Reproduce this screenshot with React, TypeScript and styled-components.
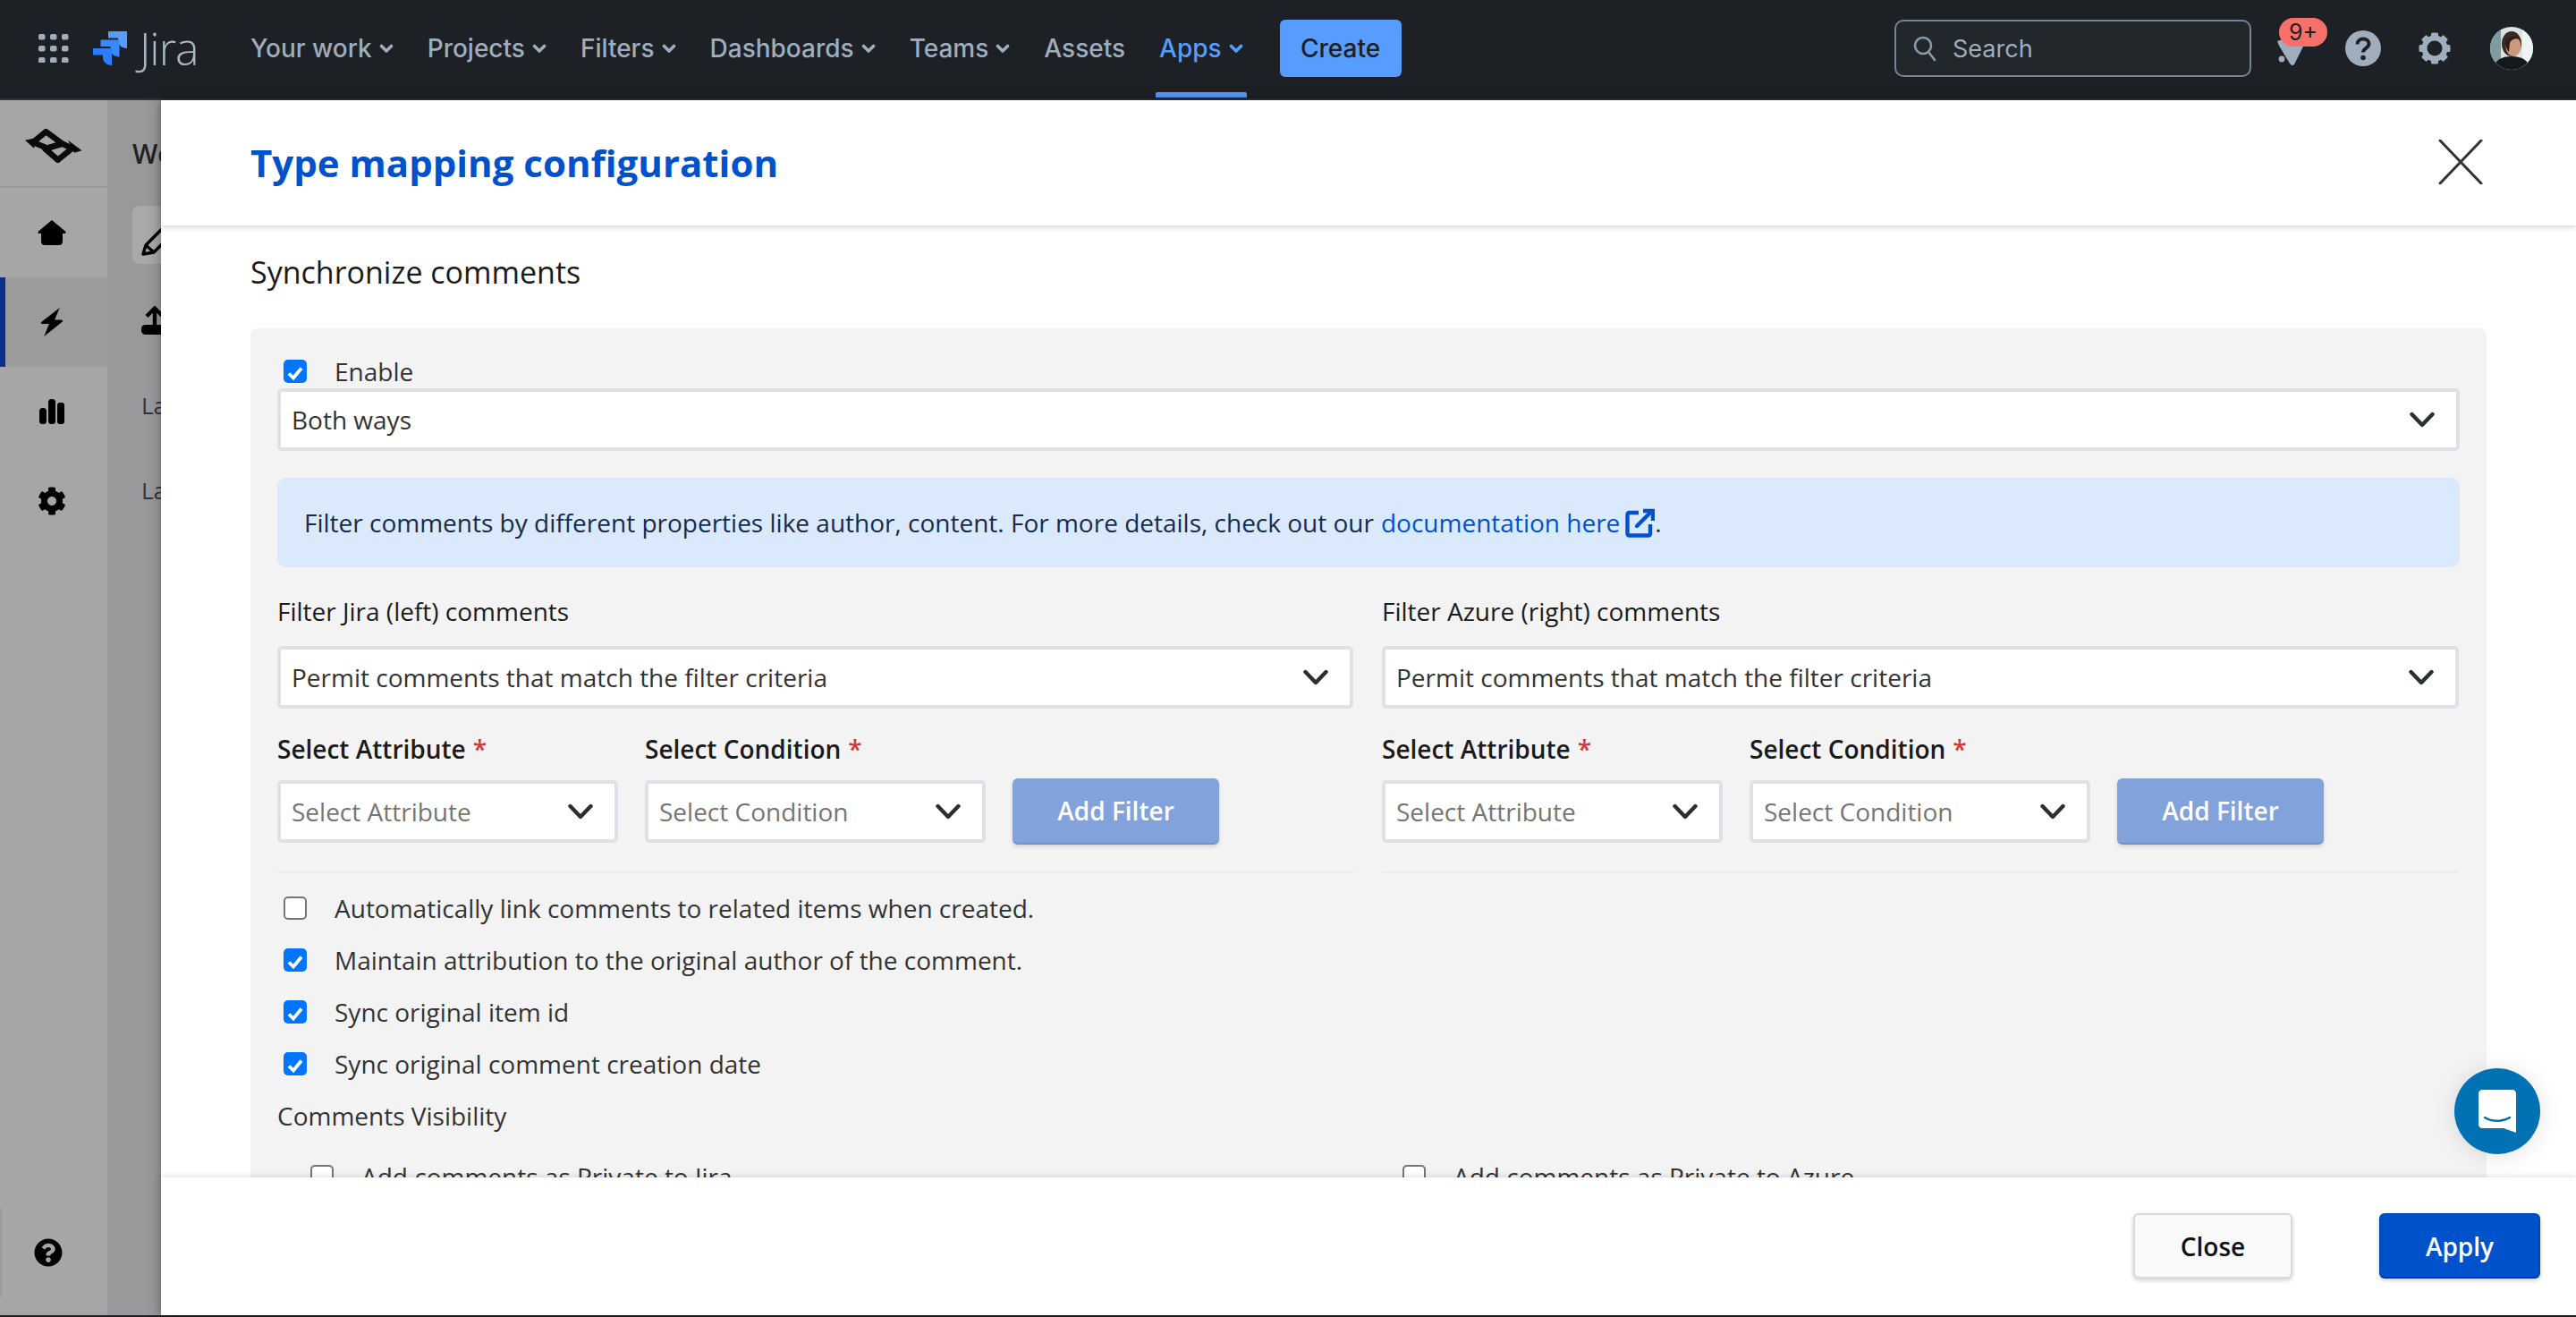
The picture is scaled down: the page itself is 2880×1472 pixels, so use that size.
import React from "react";
import styled, { createGlobalStyle } from "styled-components";
import { FaCog, FaQuestionCircle } from "react-icons/fa";

const Global = createGlobalStyle`
  html, body { margin: 0; padding: 0; background: #fff; }
  * { box-sizing: border-box; }
`;

const Chevron = () => (
  <svg width="16" height="16" viewBox="0 0 16 16" fill="none">
    <path d="M2.5 5.5l5.5 5.5 5.5-5.5" stroke="currentColor" strokeWidth="3.6" strokeLinecap="round" strokeLinejoin="round" />
  </svg>
);

const SelectArrow = () => (
  <svg width="28" height="18" viewBox="0 0 28 18" fill="none">
    <path d="M2.5 3l11.5 12L25.5 3" stroke="#2b2f33" strokeWidth="4.4" strokeLinecap="round" strokeLinejoin="round" />
  </svg>
);

const Tick = () => (
  <svg width="26" height="26" viewBox="0 0 26 26" fill="none">
    <path d="M6 13.5l5 5 9-11" stroke="#fff" strokeWidth="3.8" />
  </svg>
);

const Grid = () => (
  <svg width="34" height="32" viewBox="0 0 34 32" fill="#9fadbc">
    {[0, 13, 26].map((y) =>
      [0, 13, 26].map((x) => <rect key={`${x}-${y}`} x={x} y={y} width="7.5" height="6.5" rx="2" />)
    )}
  </svg>
);

const jiraPiece = "M0 0h21v19c-6 0-10-4-10-9V7.500H0z";

const JiraMark = () => (
  <svg width="38" height="38" viewBox="0 0 38 38">
    <path d={jiraPiece} transform="translate(17 0)" fill="#579dff" />
    <path d={jiraPiece} transform="translate(8.500 9.500)" fill="#388bff" />
    <path d={jiraPiece} transform="translate(0 19)" fill="#2c7dff" />
  </svg>
);

const HeaderSearch = () => (
  <svg width="26" height="30" viewBox="0 0 26 30" fill="none" stroke="#8c9bab" strokeWidth="2.6">
    <circle cx="11" cy="12" r="9" />
    <path d="M17 19l7 9" strokeLinecap="round" />
  </svg>
);

const Bell = () => (
  <svg width="34" height="38" viewBox="0 0 34 38" fill="#9fadbc">
    <path d="M0 10L30 0l4 6-15 30c-2 2-3 1-5-1L2 15z" />
    <circle cx="5" cy="30" r="3.4" />
  </svg>
);

const HelpDot = () => (
  <svg width="40" height="40" viewBox="0 0 40 40">
    <circle cx="20" cy="20" r="20" fill="#9fadbc" />
    <path d="M13.5 15.5c0-3.6 2.8-6 6.5-6s6.5 2.4 6.5 5.6c0 4.8-6.5 4.6-6.5 9.4" fill="none" stroke="#1d2125" strokeWidth="4" />
    <circle cx="20" cy="30.5" r="2.8" fill="#1d2125" />
  </svg>
);

const HeaderGear = () => (
  <svg width="36" height="36" viewBox="0 0 36 36" fill="#9fadbc">
    {[0, 45, 90, 135, 180, 225, 270, 315].map((a) => (
      <rect key={a} x="14" y="0.5" width="8" height="8" rx="1.6" transform={`rotate(${a} 18 18)`} />
    ))}
    <circle cx="18" cy="18" r="11.5" fill="none" stroke="#9fadbc" strokeWidth="6" />
  </svg>
);

const Avatar = () => (
  <svg width="48" height="48" viewBox="0 0 48 48">
    <clipPath id="av"><circle cx="24" cy="24" r="24" /></clipPath>
    <g clipPath="url(#av)">
      <rect width="48" height="48" fill="#d9e3e2" />
      <rect x="0" y="0" width="12" height="48" fill="#7d9ca0" />
      <rect x="36" y="0" width="12" height="48" fill="#eef3f3" />
      <ellipse cx="24" cy="19" rx="11" ry="14" fill="#3a2a22" />
      <ellipse cx="26" cy="22" rx="8.5" ry="11" fill="#c99a80" />
      <path d="M17 18c1-8 13-10 17-4-6-2-10 0-12 4l-1 10c-2-2-4-6-4-10z" fill="#2c1f19" />
      <path d="M4 48c0-10 8-15 20-15s20 5 20 15z" fill="#14191d" />
    </g>
  </svg>
);

const SideBrand = () => (
  <svg width="64" height="38" viewBox="0 0 64 38" fill="none" stroke="#0b0b0b" strokeWidth="6.500" strokeLinejoin="round">
    <path d="M9 15L23.300 3.200 41.700 16.700 25 21.700z" />
    <path d="M22.300 22.300L36.700 34.800 52.700 21.700 41.700 16.700z" />
    <path d="M0 12.700L13 10 10 21.700z" fill="#0b0b0b" stroke="none" />
    <path d="M63.500 24.300L48 12.700 55 26.700z" fill="#0b0b0b" stroke="none" />
  </svg>
);

const HomeIcon = () => (
  <svg width="32" height="28" viewBox="0 0 32 28" fill="#000">
    <path d="M16 0L31 12.500c1 1 .6 2.500-1 2.500h-2v9c0 2.400-1.600 4-4 4H8c-2.400 0-4-1.600-4-4v-9H2c-1.600 0-2-1.500-1-2.500z" />
  </svg>
);

const BoltIcon = () => (
  <svg width="26" height="32" viewBox="0 0 24 31" fill="#000">
    <path d="M20.500 0L.5 15.500c-.5 1 0 2 1 2H9L3.500 31l20-16c.5-1 0-2-1-2H15z" />
  </svg>
);

const Bars = () => (
  <svg width="28" height="28" viewBox="0 0 28 28" fill="#000">
    <rect x="0" y="10" width="8" height="18" rx="3.500" />
    <rect x="10" y="0" width="8" height="28" rx="3.500" />
    <rect x="20" y="4" width="8" height="24" rx="3" />
  </svg>
);

const ExternalLink = () => (
  <svg width="33" height="33" viewBox="0 0 33 33" fill="none" stroke="#0052cc" strokeWidth="4.4">
    <path d="M15 5H5C3.500 5 2.500 6 2.500 7.500v20.500c0 1.500 1 2.500 2.500 2.500h20.500c1.500 0 2.500-1 2.500-2.500V18" />
    <path d="M13 20L29 4" strokeLinecap="round" />
    <path d="M20 3h11v11" />
  </svg>
);

const Pencil = () => (
  <svg width="44" height="44" viewBox="0 0 44 44" fill="none" stroke="#000" strokeWidth="3.400">
    <path d="M3 40l3-10L30 6l9 8-24 24z" strokeLinejoin="round" />
    <path d="M6 30l9 8M26 10l9 8" />
  </svg>
);

const Upload = () => (
  <svg width="32" height="32" viewBox="0 0 32 32" fill="none">
    <rect x="0" y="21" width="32" height="11" rx="4.500" fill="#000" />
    <path d="M15 24V3M6 11.500L15 2.500l9 9" stroke="#000" strokeWidth="4.400" />
  </svg>
);

const Page = styled.div`
  width: 2880px;
  height: 1472px;
  display: flex;
  flex-direction: column;
  overflow: hidden;
  background: #1d2125;
  position: relative;
`;

const TopBar = styled.header`
  height: 112px;
  flex: none;
  display: flex;
  align-items: center;
  background: #1d2125;
  border-bottom: 2px solid #2c333a;
  padding: 0 48px 2px 43px;
  font-family: Inter, "Liberation Sans", sans-serif;
`;

const Brand = styled.div`
  display: flex;
  align-items: center;
  gap: 27px;
  margin-right: 60px;
`;

const BrandGroup = styled.div`
  display: flex;
  align-items: center;
  gap: 14px;
`;

const BrandName = styled.span`
  width: 64px;
  color: #a8b6c6;
  font-family: "Open Sans", sans-serif;
  font-weight: 300;
  font-size: 50px;
  line-height: 1;
  letter-spacing: -1px;
`;

const Nav = styled.nav`
  display: flex;
  align-items: center;
  height: 100%;
  gap: 38px;
`;

const NavItem = styled.div<{ $active?: boolean }>`
  position: relative;
  display: flex;
  align-items: center;
  height: 100%;
  gap: 8px;
  font-size: 28px;
  font-weight: 500;
  color: ${(p) => (p.$active ? "#579dff" : "#9fadbc")};
  ${(p) =>
    p.$active &&
    `&::after {
      content: "";
      position: absolute;
      left: -4px;
      right: -4px;
      bottom: -1px;
      height: 6px;
      border-radius: 2px 2px 0 0;
      background: #579dff;
    }`}
`;

const CreateButton = styled.button`
  width: 136px;
  height: 64px;
  margin-left: 41px;
  border: none;
  border-radius: 6px;
  background: #579dff;
  color: #1d2125;
  font: 500 28px Inter, sans-serif;
`;

const Spacer = styled.div`
  flex: 1;
`;

const SearchBox = styled.div`
  width: 399px;
  height: 64px;
  display: flex;
  align-items: center;
  gap: 18px;
  padding-left: 19px;
  border: 2px solid #738496;
  border-radius: 10px;
  background: #22272b;
  color: #9fadbc;
  font-size: 27px;
`;

const Actions = styled.div`
  display: flex;
  align-items: center;
  margin-left: 29px;
`;

const BellWrap = styled.div`
  position: relative;
  width: 34px;
  height: 38px;
  margin-top: 2px;
  margin-right: 42px;
`;

const Badge = styled.span`
  position: absolute;
  left: 2px;
  top: -16px;
  width: 54px;
  height: 32px;
  border-radius: 16px;
  background: #f87168;
  color: #1d2125;
  font-size: 25px;
  line-height: 32px;
  text-align: center;
`;

const ActionGap = styled.div<{ $w: number }>`
  display: flex;
  margin-right: ${(p) => p.$w}px;
`;

const Main = styled.div`
  flex: 1;
  min-height: 0;
  display: flex;
  margin-bottom: 2px;
`;

const Sidebar = styled.aside`
  width: 120px;
  flex: none;
  display: flex;
  flex-direction: column;
  background: #a6a6a6;
  position: relative;
`;

const SideLogo = styled.div`
  height: 98px;
  flex: none;
  display: flex;
  align-items: center;
  padding: 5px 0 0 28px;
  border-bottom: 2px solid #999;
`;

const SideItem = styled.div<{ $active?: boolean }>`
  height: 100px;
  flex: none;
  display: flex;
  align-items: center;
  justify-content: center;
  padding-right: 4px;
  color: #000;
  font-size: 32px;
  background: ${(p) => (p.$active ? "#9b9b9b" : "transparent")};
  box-shadow: ${(p) => (p.$active ? "inset 6px 0 0 #07308a" : "none")};
`;

const SideHelp = styled.div`
  margin-top: auto;
  height: 100px;
  margin-bottom: 20px;
  display: flex;
  align-items: center;
  padding-left: 38px;
  color: #000;
  font-size: 32px;
  box-shadow: inset 2px 0 0 #9c9c9c;
`;

const SubPanel = styled.div`
  width: 60px;
  flex: none;
  overflow: hidden;
  background: #99999b;
  padding: 40px 0 0 28px;
  font-family: "Open Sans", sans-serif;
`;

const SubInner = styled.div`
  width: 300px;
  display: flex;
  flex-direction: column;
`;

const SubTitle = styled.div`
  height: 40px;
  font-size: 30px;
  font-weight: 600;
  line-height: 40px;
  color: #222;
`;

const SubTool = styled.div`
  width: 200px;
  height: 65px;
  margin-top: 38px;
  padding: 14px 0 0 9px;
  border-radius: 8px;
  background: #a9a9ab;
`;

const SubUpload = styled.div`
  height: 32px;
  margin: 47px 0 0 10px;
`;

const SubLine = styled.div<{ $top: number }>`
  margin: ${(p) => p.$top}px 0 0 10px;
  font-size: 26px;
  font-weight: 500;
  line-height: 36px;
  color: #2b3648;
`;

const Modal = styled.section`
  flex: 1;
  min-width: 0;
  position: relative;
  display: flex;
  flex-direction: column;
  background: #fff;
  box-shadow: 0 0 14px rgba(0, 0, 0, 0.35);
  font-family: "Open Sans", sans-serif;
`;

const ModalHeader = styled.div`
  height: 140px;
  flex: none;
  position: relative;
  z-index: 1;
  display: flex;
  align-items: center;
  justify-content: space-between;
  padding: 0 104px 2px 100px;
  background: #fff;
  box-shadow: 0 2px 6px rgba(0, 0, 0, 0.18);
`;

const ModalTitle = styled.h1`
  margin: 0;
  font-size: 42px;
  font-weight: 700;
  color: #0052cc;
`;

const ModalBody = styled.div`
  flex: 1;
  min-height: 0;
  overflow: hidden;
  padding: 27px 100px 0 100px;
`;

const SectionTitle = styled.h2`
  margin: 0 0 38px;
  font-size: 34px;
  font-weight: 400;
  line-height: 50px;
  color: #1b1b1b;
`;

const Card = styled.div`
  display: flex;
  flex-direction: column;
  padding: 31px 30px 40px;
  border-radius: 8px;
  background: #f3f3f3;
  color: #333;
  font-size: 28px;
`;

const CheckRow = styled.label<{ $indent?: number; $below?: number }>`
  display: flex;
  align-items: center;
  height: 34px;
  margin-left: ${(p) => p.$indent ?? 7}px;
  margin-bottom: ${(p) => p.$below ?? 0}px;
  gap: 31px;
  line-height: 34px;
  white-space: nowrap;
`;

const CheckBox = styled.span<{ $on?: boolean }>`
  width: 26px;
  height: 26px;
  flex: none;
  border-radius: 5px;
  background: ${(p) => (p.$on ? "#0075ff" : "#fff")};
  border: ${(p) => (p.$on ? "none" : "2px solid #767676")};
`;

const SelectBox = styled.div<{ $w?: number; $muted?: boolean }>`
  width: ${(p) => (p.$w ? `${p.$w}px` : "100%")};
  height: 70px;
  display: flex;
  align-items: center;
  justify-content: space-between;
  padding: 0 24px 0 12px;
  border: 4px solid #dfe1e6;
  border-radius: 5px;
  background: #fff;
  color: ${(p) => (p.$muted ? "#757575" : "#333")};
`;

const Banner = styled.div`
  height: 100px;
  margin-top: 30px;
  display: flex;
  align-items: center;
  padding-left: 30px;
  border-radius: 10px;
  background: #dbe9fd;
  color: #172b4d;
`;

const DocLink = styled.a`
  display: inline-flex;
  align-items: center;
  gap: 6px;
  margin-left: 8px;
  color: #0052cc;
`;

const Columns = styled.div`
  display: grid;
  grid-template-columns: 1203px 1204px;
  column-gap: 32px;
`;

const FilterColumn = styled.div`
  display: flex;
  flex-direction: column;
`;

const ColumnLabel = styled.div`
  height: 38px;
  margin: 30px 0 20px;
  line-height: 38px;
  color: #1b1b1b;
`;

const FieldRow = styled.div`
  display: flex;
  align-items: flex-end;
  gap: 30px;
  height: 184px;
  padding-bottom: 32px;
  margin-bottom: 22px;
  border-bottom: 2px solid #ececec;
`;

const Field = styled.div`
  display: flex;
  flex-direction: column;
  gap: 16px;
`;

const FieldLabel = styled.div`
  font-weight: 600;
  line-height: 38px;
  color: #1b1b1b;
`;

const Req = styled.span`
  margin-left: 8px;
  color: #d03a36;
`;

const AddFilter = styled.button`
  width: 231px;
  height: 74px;
  margin: 0 0 -2px 0;
  border: none;
  border-bottom: 2px solid #7391cc;
  border-radius: 6px;
  background: #82a2dc;
  box-shadow: 0 2px 4px rgba(0, 0, 0, 0.15);
  color: #fff;
  font: 600 28px "Open Sans", sans-serif;
`;

const CheckList = styled.div`
  display: flex;
  flex-direction: column;
  gap: 24px;
`;

const VisibilityTitle = styled.div`
  height: 34px;
  margin-top: 24px;
  line-height: 34px;
  color: #333;
`;

const VisibilityGrid = styled.div`
  display: grid;
  grid-template-columns: 1235px 1fr;
  margin-top: 34px;
`;

const ModalFooter = styled.div`
  height: 154px;
  flex: none;
  position: relative;
  z-index: 1;
  display: flex;
  justify-content: flex-end;
  align-items: flex-start;
  gap: 97px;
  padding: 40px 40px 0 0;
  background: #fff;
  box-shadow: 0 -2px 6px rgba(0, 0, 0, 0.1);
`;

const FootButton = styled.button<{ $primary?: boolean }>`
  width: ${(p) => (p.$primary ? 180 : 178)}px;
  height: 73px;
  border-radius: 6px;
  border: 2px solid ${(p) => (p.$primary ? "#0047b3" : "#d9d9d9")};
  border-bottom-color: ${(p) => (p.$primary ? "#06348c" : "#d9d9d9")};
  background: ${(p) => (p.$primary ? "#0052cc" : "#fafafa")};
  box-shadow: 0 2px 5px rgba(0, 0, 0, 0.2);
  color: ${(p) => (p.$primary ? "#fff" : "#111")};
  font: 600 28px "Open Sans", sans-serif;
`;

const ChatBubble = styled.div`
  position: absolute;
  right: 40px;
  top: 1194px;
  width: 96px;
  height: 96px;
  z-index: 3;
  display: flex;
  align-items: center;
  justify-content: center;
  border-radius: 50%;
  background: #0071b2;
  box-shadow: 0 2px 26px rgba(0, 0, 0, 0.12);
`;

const ChatIcon = () => (
  <svg width="42" height="48" viewBox="0 0 42 48">
    <path d="M4 0h34c2 0 4 2 4 4v44l-14-5H4c-2 0-4-2-4-4V4c0-2 2-4 4-4z" fill="#fff" />
    <path d="M7 31c8 5 20 5 28 0" fill="none" stroke="#0071b2" strokeWidth="2.4" strokeLinecap="round" />
  </svg>
);

const filterSide = (title: string) => (
  <FilterColumn>
    <ColumnLabel>{title}</ColumnLabel>
    <SelectBox>
      Permit comments that match the filter criteria
      <SelectArrow />
    </SelectBox>
    <FieldRow>
      <Field>
        <FieldLabel>
          Select Attribute<Req>*</Req>
        </FieldLabel>
        <SelectBox $w={381} $muted>
          Select Attribute
          <SelectArrow />
        </SelectBox>
      </Field>
      <Field>
        <FieldLabel>
          Select Condition<Req>*</Req>
        </FieldLabel>
        <SelectBox $w={381} $muted>
          Select Condition
          <SelectArrow />
        </SelectBox>
      </Field>
      <AddFilter>Add Filter</AddFilter>
    </FieldRow>
  </FilterColumn>
);

const checks = [
  { label: "Automatically link comments to related items when created.", on: false },
  { label: "Maintain attribution to the original author of the comment.", on: true },
  { label: "Sync original item id", on: true },
  { label: "Sync original comment creation date", on: true },
];

export default function App() {
  return (
    <Page>
      <Global />
      <TopBar>
        <Brand>
          <Grid />
          <BrandGroup>
            <JiraMark />
            <BrandName>Jira</BrandName>
          </BrandGroup>
        </Brand>
        <Nav>
          <NavItem>Your work <Chevron /></NavItem>
          <NavItem>Projects <Chevron /></NavItem>
          <NavItem>Filters <Chevron /></NavItem>
          <NavItem>Dashboards <Chevron /></NavItem>
          <NavItem>Teams <Chevron /></NavItem>
          <NavItem>Assets</NavItem>
          <NavItem $active>Apps <Chevron /></NavItem>
        </Nav>
        <CreateButton>Create</CreateButton>
        <Spacer />
        <SearchBox>
          <HeaderSearch />
          Search
        </SearchBox>
        <Actions>
          <BellWrap>
            <Bell />
            <Badge>9+</Badge>
          </BellWrap>
          <ActionGap $w={42}><HelpDot /></ActionGap>
          <ActionGap $w={44}><HeaderGear /></ActionGap>
          <Avatar />
        </Actions>
      </TopBar>
      <Main>
        <Sidebar>
          <SideLogo><SideBrand /></SideLogo>
          <SideItem><HomeIcon /></SideItem>
          <SideItem $active><BoltIcon /></SideItem>
          <SideItem><Bars /></SideItem>
          <SideItem><FaCog /></SideItem>
          <SideHelp><FaQuestionCircle /></SideHelp>
        </Sidebar>
        <SubPanel>
          <SubInner>
            <SubTitle>Workflows</SubTitle>
            <SubTool><Pencil /></SubTool>
            <SubUpload><Upload /></SubUpload>
            <SubLine $top={61}>Last run</SubLine>
            <SubLine $top={59}>Last sync</SubLine>
          </SubInner>
        </SubPanel>
        <Modal>
          <ModalHeader>
            <ModalTitle>Type mapping configuration</ModalTitle>
            <svg width="50" height="50" viewBox="0 0 50 50" stroke="#333" strokeWidth="3" strokeLinecap="round">
              <path d="M2 1l46 48M48 1L2 49" />
            </svg>
          </ModalHeader>
          <ModalBody>
            <SectionTitle>Synchronize comments</SectionTitle>
            <Card>
              <CheckRow $below={2}>
                <CheckBox $on><Tick /></CheckBox>
                Enable
              </CheckRow>
              <SelectBox>
                Both ways
                <SelectArrow />
              </SelectBox>
              <Banner>
                Filter comments by different properties like author, content. For more details, check out our
                <DocLink>documentation here <ExternalLink /></DocLink>.
              </Banner>
              <Columns>
                {filterSide("Filter Jira (left) comments")}
                {filterSide("Filter Azure (right) comments")}
              </Columns>
              <CheckList>
                {checks.map((c) => (
                  <CheckRow key={c.label}>
                    <CheckBox $on={c.on}>{c.on && <Tick />}</CheckBox>
                    {c.label}
                  </CheckRow>
                ))}
              </CheckList>
              <VisibilityTitle>Comments Visibility</VisibilityTitle>
              <VisibilityGrid>
                <CheckRow $indent={37}><CheckBox />Add comments as Private to Jira</CheckRow>
                <CheckRow $indent={23}><CheckBox />Add comments as Private to Azure</CheckRow>
              </VisibilityGrid>
            </Card>
          </ModalBody>
          <ModalFooter>
            <FootButton>Close</FootButton>
            <FootButton $primary>Apply</FootButton>
          </ModalFooter>
        </Modal>
      </Main>
      <ChatBubble><ChatIcon /></ChatBubble>
    </Page>
  );
}
